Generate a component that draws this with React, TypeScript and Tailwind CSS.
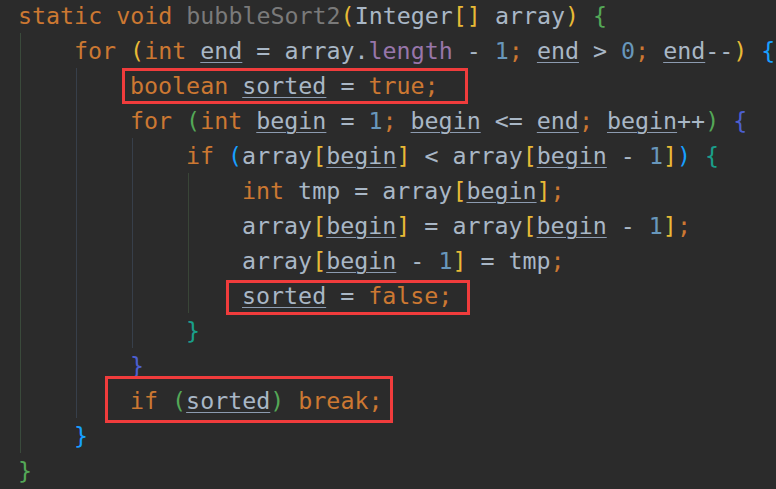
import React from "react";

const K = ({ children }: { children: React.ReactNode }) => (
  <span className="text-[#cc7832]">{children}</span>
);
const I = ({ children }: { children: React.ReactNode }) => (
  <span className="text-[#a9b7c6]">{children}</span>
);
const U = ({ children }: { children: React.ReactNode }) => (
  <span className="text-[#a9b7c6] underline decoration-[#8c9bb0] decoration-1 underline-offset-[3px]">
    {children}
  </span>
);
const N = ({ children }: { children: React.ReactNode }) => (
  <span className="text-[#6897bb]">{children}</span>
);
const Gold = ({ children }: { children: React.ReactNode }) => (
  <span className="text-[#e8ba36]">{children}</span>
);
const Green = ({ children }: { children: React.ReactNode }) => (
  <span className="text-[#54a857]">{children}</span>
);
const Blue = ({ children }: { children: React.ReactNode }) => (
  <span className="text-[#179fff]">{children}</span>
);
const Indigo = ({ children }: { children: React.ReactNode }) => (
  <span className="text-[#4c5fd0]">{children}</span>
);
const Teal = ({ children }: { children: React.ReactNode }) => (
  <span className="text-[#1a9e8a]">{children}</span>
);

const Line = ({ children }: { children?: React.ReactNode }) => (
  <div className="h-[35px] leading-[35px] whitespace-pre">{children}</div>
);

export default function App() {
  return (
    <div className="relative w-[776px] h-[489px] overflow-hidden bg-[#2b2b2b]">
      <div
        className="pl-[18px] mt-[-2px] text-[23.3px] text-[#a9b7c6]"
        style={{ fontFamily: '"DejaVu Sans Mono", "Liberation Mono", monospace' }}
      >
        <Line>
          <K>static void </K>
          <span className="text-[#7a7a7a]">bubbleSort2</span>
          <Gold>(</Gold>
          <I>Integer</I>
          <Gold>[]</Gold>
          <I> array</I>
          <Gold>)</Gold> <Green>{"{"}</Green>
        </Line>
        <div className="ml-[2px] border-l border-[#3a4a3b] pl-[53px]">
          <Line>
            <K>for </K>
            <Gold>(</Gold>
            <K>int </K>
            <U>end</U>
            <I> = array.</I>
            <span className="text-[#9876aa]">length</span>
            <I> - </I>
            <N>1</N>
            <K>; </K>
            <U>end</U>
            <I> &gt; </I>
            <N>0</N>
            <K>; </K>
            <U>end</U>
            <I>--</I>
            <Gold>)</Gold> <Blue>{"{"}</Blue>
          </Line>
          <div className="ml-[2px] border-l border-[#373f4a] pl-[53px]">
            <Line>
              <K>boolean </K>
              <U>sorted</U>
              <I> = </I>
              <K>true;</K>
            </Line>
            <Line>
              <K>for </K>
              <Green>(</Green>
              <K>int </K>
              <U>begin</U>
              <I> = </I>
              <N>1</N>
              <K>; </K>
              <U>begin</U>
              <I> &lt;= </I>
              <U>end</U>
              <K>; </K>
              <U>begin</U>
              <I>++</I>
              <Green>)</Green> <Indigo>{"{"}</Indigo>
            </Line>
            <div className="ml-[2px] border-l border-[#373f4a] pl-[53px]">
              <Line>
                <K>if </K>
                <Blue>(</Blue>
                <I>array</I>
                <Gold>[</Gold>
                <U>begin</U>
                <Gold>]</Gold>
                <I> &lt; array</I>
                <Gold>[</Gold>
                <U>begin</U>
                <I> - </I>
                <N>1</N>
                <Gold>]</Gold>
                <Blue>)</Blue> <Teal>{"{"}</Teal>
              </Line>
              <div className="ml-[2px] border-l border-[#394537] pl-[53px]">
                <Line>
                  <K>int </K>
                  <I>tmp = array</I>
                  <Gold>[</Gold>
                  <U>begin</U>
                  <Gold>]</Gold>
                  <K>;</K>
                </Line>
                <Line>
                  <I>array</I>
                  <Gold>[</Gold>
                  <U>begin</U>
                  <Gold>]</Gold>
                  <I> = array</I>
                  <Gold>[</Gold>
                  <U>begin</U>
                  <I> - </I>
                  <N>1</N>
                  <Gold>]</Gold>
                  <K>;</K>
                </Line>
                <Line>
                  <I>array</I>
                  <Gold>[</Gold>
                  <U>begin</U>
                  <I> - </I>
                  <N>1</N>
                  <Gold>]</Gold>
                  <I> = tmp</I>
                  <K>;</K>
                </Line>
                <Line>
                  <U>sorted</U>
                  <I> = </I>
                  <K>false;</K>
                </Line>
              </div>
              <Line>
                <Teal>{"}"}</Teal>
              </Line>
            </div>
            <Line>
              <Indigo>{"}"}</Indigo>
            </Line>
            <Line>
              <K>if </K>
              <Green>(</Green>
              <U>sorted</U>
              <Green>)</Green>
              <K> break;</K>
            </Line>
          </div>
          <Line>
            <Blue>{"}"}</Blue>
          </Line>
        </div>
        <Line>
          <Green>{"}"}</Green>
        </Line>
      </div>

      <div className="absolute left-[122px] top-[68px] w-[346px] h-[36px] border-[3px] border-[#f03c3c]" />
      <div className="absolute left-[226px] top-[280px] w-[244px] h-[35px] border-[3px] border-[#f03c3c]" />
      <div className="absolute left-[105px] top-[376px] w-[288px] h-[47px] border-[3px] border-[#f03c3c]" />
    </div>
  );
}
